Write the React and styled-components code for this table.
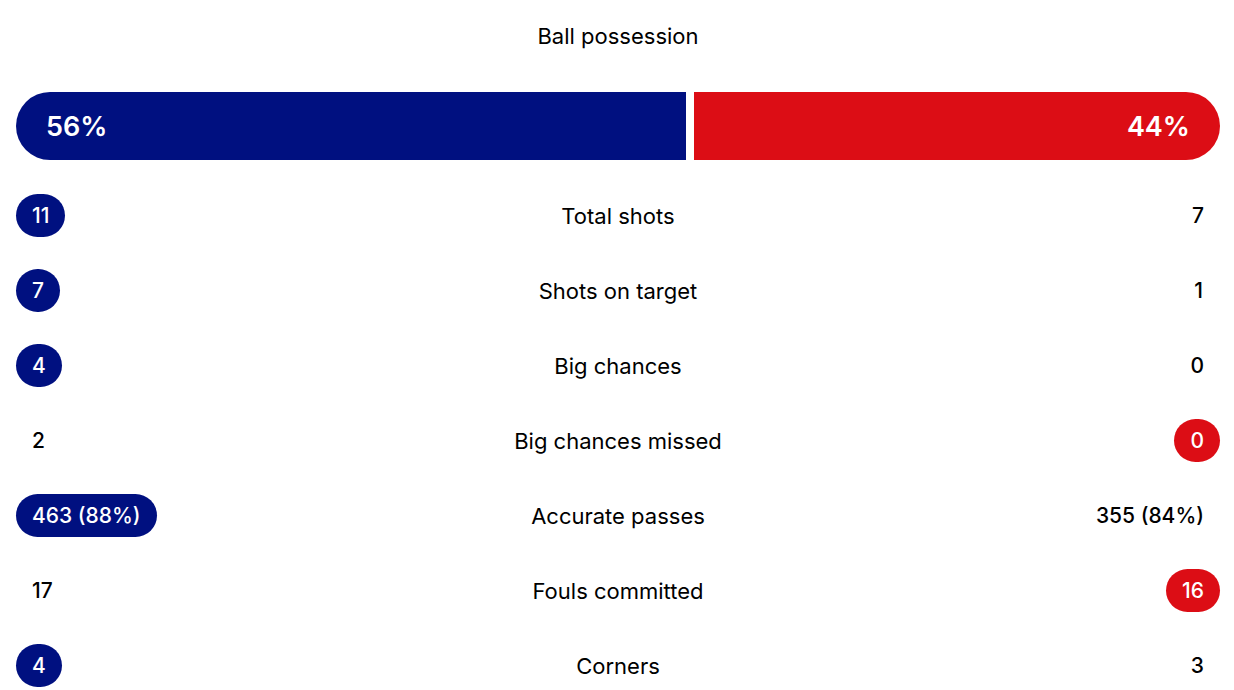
import React from "react";
import styled, { createGlobalStyle } from "styled-components";

const BLUE = "#001080";
const RED = "#dc0d15";

const Global = createGlobalStyle`
  body { margin: 0; background: #fff; font-family: "Inter", "Noto Sans", sans-serif; color: #000; }
`;

const Wrap = styled.div`
  padding: 20px 14px 0 16px;
  display: flex;
  flex-direction: column;
`;

const Title = styled.div`
  text-align: center;
  font-size: 22px;
  line-height: 32px;
  font-weight: 400;
`;

const Bar = styled.div`
  margin-top: 40px;
  display: flex;
  gap: 8px;
  height: 68px;
`;

const Segment = styled.div`
  flex: 0 0 calc((100% - 8px) * ${(p) => p.$share / 100});
  box-sizing: border-box;
  background: ${(p) => p.$color};
  color: #fff;
  display: flex;
  align-items: center;
  justify-content: ${(p) => (p.$right ? "flex-end" : "flex-start")};
  padding: 0 30px;
  border-radius: ${(p) => (p.$right ? "0 34px 34px 0" : "34px 0 0 34px")};
  font-size: 27px;
  font-weight: 600;
`;

const Rows = styled.div`
  margin-top: 34px;
  display: flex;
  flex-direction: column;
  gap: 32px;
`;

const Row = styled.div`
  display: grid;
  grid-template-columns: 1fr auto 1fr;
  align-items: center;
  height: 43px;
`;

const Label = styled.div`
  text-align: center;
  font-size: 22px;
  font-weight: 400;
`;

const Side = styled.div`
  display: flex;
  justify-content: ${(p) => (p.$right ? "flex-end" : "flex-start")};
`;

const Value = styled.span`
  display: inline-flex;
  align-items: center;
  justify-content: center;
  height: 43px;
  min-width: 43px;
  box-sizing: border-box;
  padding: 0 16px;
  border-radius: 22px;
  font-size: 21px;
  font-weight: 500;
  background: ${(p) => p.$bg || "transparent"};
  color: ${(p) => (p.$bg ? "#fff" : "#000")};
`;

const rows = [
  ["11", "Total shots", "7", "L"],
  ["7", "Shots on target", "1", "L"],
  ["4", "Big chances", "0", "L"],
  ["2", "Big chances missed", "0", "R"],
  ["463 (88%)", "Accurate passes", "355 (84%)", "L"],
  ["17", "Fouls committed", "16", "R"],
  ["4", "Corners", "3", "L"],
];

export default function App() {
  return (
    <>
      <Global />
      <Wrap>
        <Title>Ball possession</Title>
        <Bar>
          <Segment $share={56} $color={BLUE}>56%</Segment>
          <Segment $share={44} $color={RED} $right>44%</Segment>
        </Bar>
        <Rows>
          {rows.map(([l, label, r, hi]) => (
            <Row key={label}>
              <Side>
                <Value $bg={hi === "L" ? BLUE : undefined}>{l}</Value>
              </Side>
              <Label>{label}</Label>
              <Side $right>
                <Value $bg={hi === "R" ? RED : undefined}>{r}</Value>
              </Side>
            </Row>
          ))}
        </Rows>
      </Wrap>
    </>
  );
}
